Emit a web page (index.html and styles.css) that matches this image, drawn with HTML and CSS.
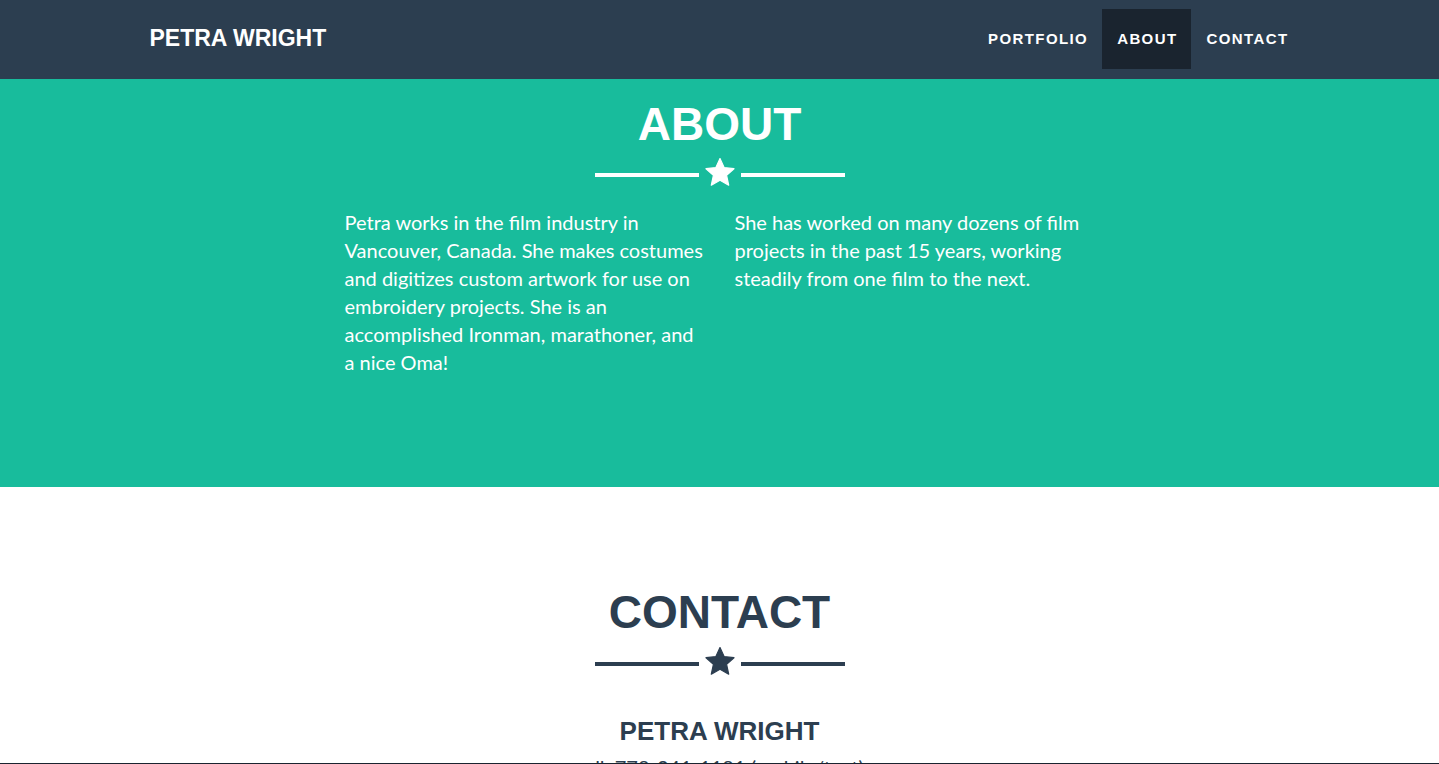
FILE: index.html
```html
<!DOCTYPE html>
<html lang="en">
<head>
<meta charset="utf-8">
<title>Petra Wright</title>
<link rel="stylesheet" href="styles.css">
</head>
<body>
<nav class="navbar">
  <div class="container nav-inner">
    <a class="brand" href="#">Petra Wright</a>
    <ul class="nav-links">
      <li><a href="#">Portfolio</a></li>
      <li><a class="active" href="#">About</a></li>
      <li><a href="#">Contact</a></li>
    </ul>
  </div>
</nav>

<section class="about">
  <h2 class="section-title">About</h2>
  <div class="divider">
    <span class="line"></span>
    <svg class="star" viewBox="0 0 30 30" width="30" height="30"><path d="M15 0.5 L19.1 9.6 L29 10.7 L21.6 17.4 L23.7 27.2 L15 22.2 L6.3 27.2 L8.4 17.4 L1 10.7 L10.9 9.6 Z" stroke-linejoin="round" stroke-width="1.2"/></svg>
    <span class="line"></span>
  </div>
  <div class="about-cols">
    <p>Petra works in the film industry in Vancouver, Canada. She makes costumes and digitizes custom artwork for use on embroidery projects. She is an accomplished Ironman, marathoner, and a nice Oma!</p>
    <p>She has worked on many dozens of film projects in the past 15 years, working steadily from one film to the next.</p>
  </div>
</section>

<section class="contact">
  <h2 class="section-title">Contact</h2>
  <div class="divider">
    <span class="line"></span>
    <svg class="star" viewBox="0 0 30 30" width="30" height="30"><path d="M15 0.5 L19.1 9.6 L29 10.7 L21.6 17.4 L23.7 27.2 L15 22.2 L6.3 27.2 L8.4 17.4 L1 10.7 L10.9 9.6 Z" stroke-linejoin="round" stroke-width="1.2"/></svg>
    <span class="line"></span>
  </div>
  <h3 class="contact-name">Petra Wright</h3>
  <p class="contact-line">cell: 778-241-1181 (mobile/text)</p>
</section>
<div class="window-edge"></div>
</body>
</html>
```

FILE: styles.css
```css
* { box-sizing: border-box; }
html, body { margin: 0; padding: 0; }
body {
  font-family: Lato, "Open Sans", sans-serif;
  background: #ffffff;
  color: #2c3e50;
}
.container {
  width: 1170px;
  margin: 0 auto;
  padding: 0 15px;
}
.navbar {
  background: #2c3e50;
  height: 79px;
}
.nav-inner {
  display: flex;
  align-items: center;
  justify-content: space-between;
  height: 79px;
}
.brand {
  font-family: "Liberation Sans", Arial, sans-serif;
  font-weight: 700;
  font-size: 23px;
  color: #ffffff;
  text-decoration: none;
  text-transform: uppercase;
  margin-top: -2px;
}
.nav-links {
  list-style: none;
  margin: 0;
  padding: 0;
  display: flex;
  margin-right: -13px;
  margin-top: -1px;
}
.nav-links a {
  display: block;
  height: 60px;
  line-height: 60px;
  padding: 0 14px 0 15px;
  font-family: "Liberation Sans", Arial, sans-serif;
  font-weight: 700;
  font-size: 15px;
  letter-spacing: 1.4px;
  text-transform: uppercase;
  color: #ffffff;
  text-decoration: none;
}
.nav-links a.active {
  background: #1a242f;
}
.section-title {
  margin: 0;
  font-family: "Liberation Sans", Arial, sans-serif;
  font-weight: 700;
  font-size: 46px;
  line-height: 1.1;
  text-transform: uppercase;
  text-align: center;
}
.divider {
  display: flex;
  align-items: center;
  justify-content: center;
  gap: 6px;
  margin: 8px auto 0;
  width: 250px;
  height: 30px;
}
.line {
  display: block;
  width: 104px;
  height: 4px;
  margin-top: 4px;
}
.star { display: block; }
.about {
  background: #18bc9c;
  color: #ffffff;
  padding: 20px 0 0;
  height: 408px;
}
.about .line { background: #ffffff; }
.about .star path { fill: #ffffff; stroke: #ffffff; }
.about-cols {
  width: 750px;
  margin: 20px auto 0;
  display: grid;
  grid-template-columns: 360px 360px;
  column-gap: 30px;
}
.about-cols p {
  margin: 0;
  font-size: 20px;
  line-height: 28px;
  font-weight: 400;
}
.contact {
  padding: 100px 0 0;
  text-align: center;
}
.contact .section-title { color: #2c3e50; }
.contact .line { background: #2c3e50; }
.contact .star path { fill: #2c3e50; stroke: #2c3e50; }
.contact .divider { margin-top: 9px; }
.contact-name {
  margin: 40px 0 0;
  font-family: "Liberation Sans", Arial, sans-serif;
  font-weight: 700;
  font-size: 26px;
  line-height: 1.1;
  text-transform: uppercase;
}
.contact-line {
  margin: 8px 0 0;
  font-size: 20px;
  line-height: 28px;
}
.window-edge {
  position: fixed;
  left: 0;
  right: 0;
  bottom: 0;
  height: 1px;
  background: #1a242f;
}
```
